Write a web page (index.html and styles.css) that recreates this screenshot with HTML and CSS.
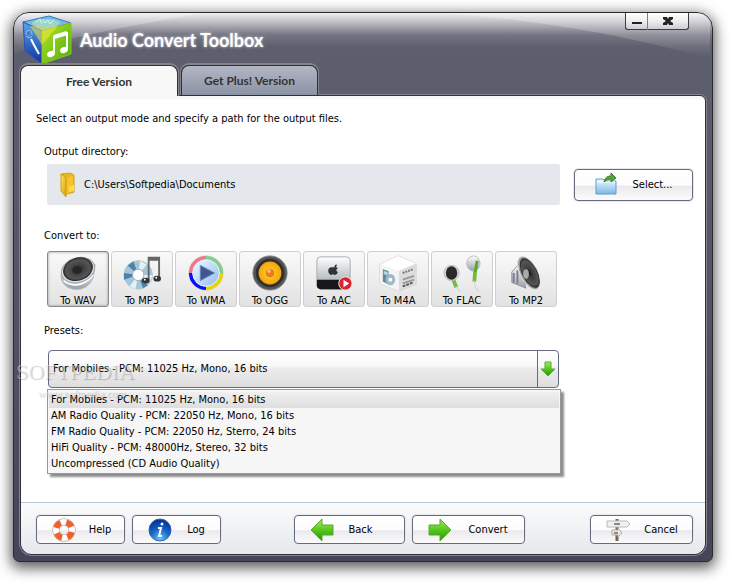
FILE: index.html
```
<!DOCTYPE html>
<html lang="en">
<head>
<meta charset="utf-8">
<title>Audio Convert Toolbox</title>
<link rel="stylesheet" href="styles.css">
</head>
<body>
<svg class="defs" aria-hidden="true">
  <defs>
    <linearGradient id="shine" x1="0" y1="0" x2="0" y2="1"><stop offset="0" stop-color="#fff" stop-opacity=".3"/><stop offset=".5" stop-color="#fff" stop-opacity=".2"/><stop offset="1" stop-color="#fff" stop-opacity="0"/></linearGradient>
    <linearGradient id="green" x1="0" y1="0" x2="0" y2="1"><stop offset="0" stop-color="#a4ec58"/><stop offset=".5" stop-color="#55c81c"/><stop offset="1" stop-color="#249400"/></linearGradient>
    <linearGradient id="lime" x1="0" y1="0" x2="1" y2="1"><stop offset="0" stop-color="#b2e32b"/><stop offset="1" stop-color="#4fae0b"/></linearGradient>
    <linearGradient id="blue" x1="0" y1="0" x2="0" y2="1"><stop offset="0" stop-color="#55a7e8"/><stop offset="1" stop-color="#122fa0"/></linearGradient>
    <linearGradient id="sky" x1="0" y1="0" x2="0" y2="1"><stop offset="0" stop-color="#eefaff"/><stop offset="1" stop-color="#79b8e8"/></linearGradient>
    <linearGradient id="silver" x1="0" y1="0" x2="0" y2="1"><stop offset="0" stop-color="#fff"/><stop offset="1" stop-color="#98a0a6"/></linearGradient>
    <linearGradient id="gold" x1="0" y1="0" x2="1" y2="1"><stop offset="0" stop-color="#ffe867"/><stop offset="1" stop-color="#d89a00"/></linearGradient>
    <radialGradient id="dark"><stop offset="0" stop-color="#151515"/><stop offset=".3" stop-color="#3c3c3c"/><stop offset=".8" stop-color="#555"/><stop offset="1" stop-color="#262626"/></radialGradient>
    <radialGradient id="amber"><stop offset="0" stop-color="#ffd43a"/><stop offset="1" stop-color="#f5a307"/></radialGradient>
    <radialGradient id="info" cx=".5" cy=".9" r=".9"><stop offset="0" stop-color="#65c4ff"/><stop offset=".5" stop-color="#1763c6"/><stop offset="1" stop-color="#082c86"/></radialGradient>
    <linearGradient id="glass" x1="0" y1="0" x2="1" y2="1"><stop offset="0" stop-color="#f2f9ff"/><stop offset="1" stop-color="#8fbdf0"/></linearGradient>
  </defs>
</svg>
<div class="window">
  <div class="gloss" aria-hidden="true"><svg viewBox="0 0 700 50" preserveAspectRatio="none"><path d="M0 40Q80 18 190 0H0ZM430 0Q560 10 660 36L698 44V0Z" fill="url(#shine)"/></svg></div>
  <header class="titlebar">
    <svg class="logo" viewBox="0 0 50 50" aria-hidden="true">
      <path d="M1 7L27 1L49 8L20 16Z" fill="#75b9ec" stroke="#3478ba"/>
      <path d="M1 7L20 16V49L3 36Z" fill="url(#blue)" stroke="#2858b8"/>
      <path d="M20 16L49 8V39L20 49Z" fill="url(#lime)" stroke="#8ac41e"/>
      <path d="M8 11L36 11L20 30Z" fill="#ffe83a" opacity=".5"/>
      <ellipse cx="24" cy="8" rx="14" ry="4" fill="#a6dcc0" opacity=".8"/>
      <path d="M14 7l4-3 2 5m1-4l2 3 3-3 2 4 4-4" stroke="#def6df" fill="none"/>
      <ellipse cx="7" cy="19" rx="3" ry="4" fill="#5c8ed6" stroke="#8fb8ee"/><path d="M5 17l5 4m-6 0l4-5" stroke="#3f6bc0"/>
      <path d="M9 24l3 6 5 9" fill="none" stroke="#fff" stroke-width="2"/>
      <path d="M32 38V22l13-4v16" fill="none" stroke="#fff" stroke-width="2"/><path d="M32 22l13-4" stroke="#fff" stroke-width="4"/>
      <ellipse cx="29" cy="39" rx="4" ry="3" transform="rotate(-25 29 39)" fill="#fff"/><ellipse cx="42" cy="35" rx="4" ry="3" transform="rotate(-25 42 35)" fill="#fff"/>
    </svg>
    <h1>Audio Convert Toolbox</h1>
    <div class="controls">
      <button class="minimize" aria-label="Minimize"><svg width="10" height="8"><path d="M0 5h10v2H0z" fill="#222"/></svg></button>
      <button class="close" aria-label="Close"><svg width="10" height="8"><path d="M0 0h4l1 2 1-2h4v2L7 4l3 2v2H6L5 6 4 8H0V6l3-2-3-2z" fill="#222"/></svg></button>
    </div>
  </header>
  <nav class="tabs" role="tablist">
    <button class="tab active" role="tab" aria-selected="true">Free Version</button>
    <button class="tab" role="tab" aria-selected="false">Get Plus! Version</button>
  </nav>
  <div class="panel">
    <main>
      <p class="intro">Select an output mode and specify a path for the output files.</p>
      <section class="section">
        <h2>Output directory:</h2>
        <div class="directory">
          <div class="path">
            <svg width="18" height="26" viewBox="0 0 18 26" aria-hidden="true"><path d="M10 20l6-2-3 5H6z" fill="#ddd"/><path d="M2 2l9-1 4 2v17l-8 2z" fill="#e9b51a" stroke="#d5a117"/><path d="M2 2l5 4v19l-5-6z" fill="url(#gold)" stroke="#d2a112"/><path d="M8 6l6-3v12l-3 1v4l-3 2z" fill="#f6c32f"/><path d="M10 15l5-2v6l-5 1z" fill="#ffdb4c"/></svg>
            <span>C:\Users\Softpedia\Documents</span>
          </div>
          <button class="button select">
            <svg width="24" height="24" viewBox="0 0 24 24" aria-hidden="true"><path d="M2 21V6h7l2 2h11v13z" fill="url(#sky)" stroke="#699bc1"/><path d="M3 9h18" stroke="#fff"/><path d="M10 9c1-5 4-6 7-6V0l5 5-5 4V6c-3 0-4 1-7 3z" fill="#55a838" stroke="#377e28"/></svg>
            <span>Select...</span>
          </button>
        </div>
      </section>
      <section class="section convert">
        <h2>Convert to:</h2>
        <div class="formats">
          <button class="format chosen" aria-pressed="true"><svg viewBox="0 0 40 40" aria-hidden="true"><path d="M2 22q0 12 13 15 15 2 21-12l2-14z" fill="url(#silver)" stroke="#aeb5ba"/><path d="M5 28q17 11 31-6" fill="none" stroke="#fff" stroke-width="2"/><ellipse cx="20" cy="17" rx="18" ry="13" transform="rotate(-18 20 17)" fill="#d5dadc" stroke="#9ba1a4"/><ellipse cx="20" cy="16" rx="16" ry="12" transform="rotate(-18 20 16)" fill="url(#dark)"/><ellipse cx="19" cy="17" rx="5" ry="4" fill="#252525"/></svg><span>To WAV</span></button>
          <button class="format"><svg viewBox="0 0 40 40" aria-hidden="true"><circle cx="16" cy="22" r="15" fill="#a5c6d8" stroke="#b7c6ce"/><path d="M16 22L5 12l6-4zM16 22l10 11-5 3zM16 22L1 20v7z" fill="#4c81a9"/><path d="M16 22L18 7l7 4zM16 22l-3 15-6-3zM16 22l15 0-2 7z" fill="#e4f2f7"/><circle cx="16" cy="22" r="6" fill="#fff" stroke="#94adba"/><path d="M27 28V4h11v22M27 6h11" fill="none" stroke="#666" stroke-width="2"/><ellipse cx="24" cy="28" rx="4" ry="3" fill="#333"/><ellipse cx="36" cy="26" rx="4" ry="3" fill="#333"/><circle cx="23" cy="27" r="1" fill="#fff"/><circle cx="35" cy="25" r="1" fill="#fff"/></svg><span>To MP3</span></button>
          <button class="format"><svg viewBox="0 0 40 40" aria-hidden="true"><circle cx="20" cy="20" r="18" fill="#fff" stroke="#ccc"/><g fill="none" stroke-width="4"><path d="M4 20A16 16 0 0 1 20 4" stroke="#f07884"/><path d="M20 4A16 16 0 0 1 36 20" stroke="#83cf8d"/><path d="M36 20A16 16 0 0 1 20 36" stroke="#e9d400"/><path d="M20 36A16 16 0 0 1 4 20" stroke="#0b12f0"/></g><circle cx="20" cy="20" r="14" fill="url(#glass)" stroke="#e4f0ff"/><path d="M14 12l15 8-15 8z" fill="#3f5790" stroke="#6382bd"/></svg><span>To WMA</span></button>
          <button class="format"><svg viewBox="0 0 40 40" aria-hidden="true"><circle cx="20" cy="20" r="18" fill="#555" stroke="#888"/><circle cx="20" cy="20" r="15" fill="#303030"/><circle cx="20" cy="20" r="12" fill="url(#amber)"/><circle cx="20" cy="20" r="4" fill="#f37717" stroke="#d88213"/><circle cx="19" cy="18" r="2" fill="#ffb47e"/></svg><span>To OGG</span></button>
          <button class="format"><svg viewBox="0 0 40 40" aria-hidden="true"><rect x="2" y="3" width="35" height="34" rx="4" fill="url(#silver)" stroke="#aaa"/><path d="M2 27h35v6q0 4-4 4H6q-4 0-4-4z" fill="#171717"/><path d="M20 14c1-3 2-3 3-3 0 2-1 3-3 3zM17 14c-5 1-3 8 0 8 2-1 2-1 4 0 2 0 3-2 3-3-2-1-2-3 0-4-2-2-3-1-4-1z" fill="#333"/><circle cx="32" cy="31" r="7" fill="#d9242e" stroke="#eee"/><path d="M30 27l6 4-6 4z" fill="#fff"/></svg><span>To AAC</span></button>
          <button class="format"><svg viewBox="0 0 40 40" aria-hidden="true"><path d="M1 11L20 2l19 8v22L21 39 1 31z" fill="#eee" stroke="#ccc"/><path d="M1 11L20 2l19 8-18 8z" fill="#fff"/><path d="M1 11l20 7v21L1 31z" fill="#f4f4f4"/><path d="M21 18l18-8v22l-18 7z" fill="#dcdcdc"/><path d="M4 16l6 2v14l-6-3z" fill="#5b8d9a"/><path d="M5 18l4 1v4l-4-2z" fill="#b5dbe2"/><ellipse cx="12" cy="27" rx="5" ry="6" fill="#9ebac8"/><circle cx="12" cy="27" r="2" fill="#fff"/><path d="M25 20l11-4" stroke="#777" stroke-width="2" stroke-dasharray="2 1"/><path d="M25 27l12-4M25 31l12-4" stroke="#999" stroke-width="2"/><path d="M25 34l11-4" stroke="#555" stroke-width="2" stroke-dasharray="3 1"/></svg><span>To M4A</span></button>
          <button class="format"><svg viewBox="0 0 40 40" aria-hidden="true"><path d="M10 25l4 10M34 14l-1 15" stroke="#72bd39" stroke-width="4"/><path d="M14 34l4 6M33 28l1 8 4 3" fill="none" stroke="#ccc"/><circle cx="9" cy="20" r="8" fill="#d5d5d5" stroke="#bbb"/><ellipse cx="9" cy="20" rx="6" ry="7" fill="#292929"/><ellipse cx="32" cy="10" rx="7" ry="8" fill="url(#silver)" stroke="#bbb"/><path d="M36 7l-2 12" stroke="#55aa25" stroke-width="3"/></svg><span>To FLAC</span></button>
          <button class="format"><svg viewBox="0 0 40 40" aria-hidden="true"><path d="M13 10L5 19v11l15 6z" fill="url(#silver)" stroke="#92929e"/><path d="M7 20v10m4-13v14" stroke="#7c7c95" stroke-width="2"/><ellipse cx="23" cy="20" rx="9" ry="19" transform="rotate(-27 23 20)" fill="#999" stroke="#ddd"/><ellipse cx="24" cy="20" rx="8" ry="17" transform="rotate(-27 24 20)" fill="url(#dark)"/><ellipse cx="20" cy="21" rx="3" ry="5" fill="#aaa"/></svg><span>To MP2</span></button>
        </div>
      </section>
      <section class="section presets">
        <label for="preset">Presets:</label>
        <div class="combo">
          <select id="preset"><option>For Mobiles - PCM: 11025 Hz, Mono, 16 bits</option></select>
          <span class="arrow" aria-hidden="true"><svg width="16" height="16" viewBox="0 0 16 16"><path d="M5 1h6v7h4l-7 7-7-7h4z" fill="url(#green)" stroke="#5ca83d"/></svg></span>
          <ul class="options" role="listbox" aria-label="Presets">
            <li role="option" aria-selected="true">For Mobiles - PCM: 11025 Hz, Mono, 16 bits</li>
            <li role="option">AM Radio Quality - PCM: 22050 Hz, Mono, 16 bits</li>
            <li role="option">FM Radio Quality - PCM: 22050 Hz, Sterro, 24 bits</li>
            <li role="option">HiFi Quality - PCM: 48000Hz, Stereo, 32 bits</li>
            <li role="option">Uncompressed (CD Audio Quality)</li>
          </ul>
        </div>
      </section>
    </main>
    <footer>
      <button class="button help"><svg width="24" height="24" viewBox="0 0 24 24" aria-hidden="true"><circle cx="12" cy="12" r="8" fill="none" stroke="#999" stroke-width="7"/><circle cx="12" cy="12" r="8" fill="none" stroke="#fff" stroke-width="6"/><circle cx="12" cy="12" r="8" fill="none" stroke="#f0602c" stroke-width="6" stroke-dasharray="7 5.57" stroke-dashoffset="-2"/></svg><span>Help</span></button>
      <button class="button log"><svg width="24" height="24" viewBox="0 0 24 24" aria-hidden="true"><circle cx="12" cy="12" r="11" fill="url(#info)" stroke="#316bb7"/><circle cx="14" cy="6" r="1.5" fill="#fff"/><path d="M10 10h3l-2 8h3" stroke="#fff" stroke-width="2" fill="none"/></svg><span>Log</span></button>
      <div class="steps">
        <button class="button back"><svg width="24" height="24" viewBox="0 0 24 24" aria-hidden="true"><path d="M1 12L12 1v6h11v10H12v6z" fill="url(#green)" stroke="#55a934"/></svg><span>Back</span></button>
        <button class="button next"><svg width="24" height="24" viewBox="0 0 24 24" aria-hidden="true"><path d="M23 12L12 1v6H1v10h11v6z" fill="url(#green)" stroke="#55a934"/></svg><span>Convert</span></button>
      </div>
      <button class="button cancel"><svg width="24" height="24" viewBox="0 0 24 24" aria-hidden="true"><path d="M11 1v22" stroke="#8c5d42" stroke-width="3"/><path d="M1 3h20l3 3-3 3H1z" fill="#f0f0f0" stroke="#bbb"/><path d="M6 12h6v-2l4 5-4 4v-2H6z" fill="#e8e8e8" stroke="#aaa"/><path d="M8 6h6M8 15h4" stroke="#888" stroke-width="2"/></svg><span>Cancel</span></button>
    </footer>
  </div>
  <div class="watermark" aria-hidden="true"><div class="brand">SOFTPEDIA<sup>™</sup></div><div class="site">www.softpedia.com</div></div>
</div>
</body>
</html>
```
FILE: styles.css
```
* { box-sizing: border-box; }

body {
  margin: 0;
  min-height: 100vh;
  display: flex;
  padding: 12px 20px 20px 13px;
  background: #fff;
  color: #000;
  font: 11px/16px "DejaVu Sans Condensed", "Noto Sans", sans-serif;
}

button, select {
  margin: 0;
  padding: 0;
  color: inherit;
  font: inherit;
}

h1, h2, p, ul { margin: 0; padding: 0; }

.defs { position: absolute; width: 0; height: 0; }

.window {
  position: relative;
  flex: 1;
  display: flex;
  flex-direction: column;
  padding: 0 6px 6px;
  border: 1px solid #29292e;
  border-radius: 16px 16px 6px 6px;
  background: linear-gradient(#f0f0f2 0, #b9b9c0 10px, #747582 22px, #5e5f6e 34px, #5b5c6b 120px, #44455a 100%);
  box-shadow: 0 4px 14px 2px rgba(0, 0, 0, .65);
}

.gloss {
  position: absolute;
  inset: 0 0 auto;
  height: 50px;
  overflow: hidden;
  border-radius: 15px 15px 0 0;
}

.gloss svg { display: block; width: 100%; height: 100%; }

.titlebar {
  position: relative;
  display: flex;
  height: 52px;
}

.logo { width: 50px; height: 50px; margin: 2px 8px 0 2px; }

h1 {
  color: #fff;
  font: bold 18px/54px Lato, sans-serif;
  text-shadow: 0 0 3px #d8d8e0;
}

.controls { display: flex; margin-left: auto; padding-right: 17px; }

.controls button {
  display: grid;
  place-items: center;
  height: 17px;
  border: 1px solid #3a3a48;
  border-top: 0;
  background: linear-gradient(#fff, #eee 50%, #d2cad6);
}

.controls .minimize { width: 23px; border-right-color: #7a7a9a; border-radius: 0 0 0 3px; }
.controls .close { width: 41px; border-left: 0; border-radius: 0 0 3px; }

.tabs {
  position: relative;
  z-index: 1;
  display: flex;
  gap: 3px;
  height: 30px;
}

.tab {
  width: 137px;
  height: 30px;
  border: 1px solid #303035;
  border-bottom: 0;
  border-radius: 8px 8px 0 0;
  background: linear-gradient(#b2b7c6, #8b92a3);
  color: #333;
  font: bold 12px/30px Lato, sans-serif;
  box-shadow: 0 -1px 0 1px #85848d;
  clip-path: inset(-2px -2px 0);
}

.tab.active { width: 158px; height: 31px; background: #f8f8f8; line-height: 32px; }

.panel {
  position: relative;
  flex: 1;
  display: flex;
  flex-direction: column;
  border: 1px solid #303035;
  border-radius: 0 6px 12px 12px;
  background: linear-gradient(#f7f7f7 0, #f7f7f7 3px, #fff 4px);
  box-shadow: 0 0 0 1px #85848d;
}

main { flex: 1; padding: 14px 12px 24px 15px; }

.intro { line-height: 18px; }

.section { margin: 15px 0 0 8px; }

h2, label { display: block; font-size: 11px; line-height: 18px; font-weight: normal; }

.directory { display: flex; align-items: center; gap: 14px; margin: 3px 0 0 3px; }

.path {
  flex: 1;
  display: flex;
  align-items: center;
  gap: 7px;
  height: 41px;
  padding-left: 12px;
  border-radius: 2px;
  background: #e4e8ed;
}

.button {
  position: relative;
  display: flex;
  align-items: center;
  height: 29px;
  border: 1px solid #69697f;
  border-radius: 4px;
  background: linear-gradient(#fff, #fcfcfc 50%, #ebe9ee 55%, #fbfbfb);
  box-shadow: 0 0 0 1px #e8e8ed;
}

.button span { flex: 1; text-align: center; }
.button svg { flex: none; }

.button.select { width: 119px; height: 32px; padding: 0 5px 0 19px; }

.section.convert { margin-top: 22px; }

.formats { display: flex; gap: 2px; margin: 6px 0 0 3px; }

.format {
  display: flex;
  flex-direction: column;
  align-items: center;
  width: 62px;
  height: 56px;
  padding-top: 2px;
  border: 1px solid #d0d0d0;
  border-radius: 3px;
  background: linear-gradient(#f9f9f9, #e2e2e2);
}

.format.chosen { border-color: #888; box-shadow: inset 0 0 3px #999; }
.format svg { flex: none; width: 38px; height: 38px; }
.format span { line-height: 18px; }

.section.presets { margin-top: 15px; }

.combo { position: relative; display: flex; margin: 10px 134px 0 4px; }

.combo select {
  flex: 1;
  height: 38px;
  padding: 0 26px 0 4px;
  appearance: none;
  border: 1px solid #69697f;
  border-radius: 4px;
  background: linear-gradient(#fff, #f8f8f8 40%, #ebebeb 50%, #dedede);
}

.arrow {
  position: absolute;
  inset: 1px 1px 1px auto;
  width: 21px;
  display: grid;
  place-items: center;
  border-left: 1px solid #69697f;
  pointer-events: none;
}

.options {
  position: absolute;
  inset: 39px -2px auto -1px;
  padding: 2px 1px 1px;
  border: 1px solid #999;
  background: #f6f6f6;
  list-style: none;
  box-shadow: 3px 3px 2px rgba(0, 0, 0, .45);
}

.options li { padding-left: 2px; }
.options li[aria-selected="true"] { background: linear-gradient(#f0f0f0, #dedede); }

footer {
  display: flex;
  gap: 7px;
  padding: 12px 12px 10px 15px;
  border-top: 1px solid #bbc7d5;
  border-radius: 0 0 12px 12px;
  background: linear-gradient(#fafbfc, #e5e9ed);
}

footer .button { padding: 0 0 0 15px; }
.help, .log { width: 89px; }
.steps { display: flex; gap: 7px; margin: 0 auto; padding-left: 8px; }
footer .back { width: 111px; padding-right: 17px; }
.next { width: 113px; }
.cancel { width: 103px; }

.watermark {
  position: absolute;
  z-index: 2;
  top: 346px;
  left: 2px;
  color: rgba(255, 255, 255, .4);
  font-family: "Liberation Serif", serif;
  text-shadow: 1px 1px 1px rgba(0, 0, 0, .22);
  pointer-events: none;
}

.brand { font-size: 22px; line-height: 26px; }
.brand sup { font-size: 8px; line-height: 8px; }
.site { padding-left: 22px; font-size: 11px; line-height: 16px; }
```
